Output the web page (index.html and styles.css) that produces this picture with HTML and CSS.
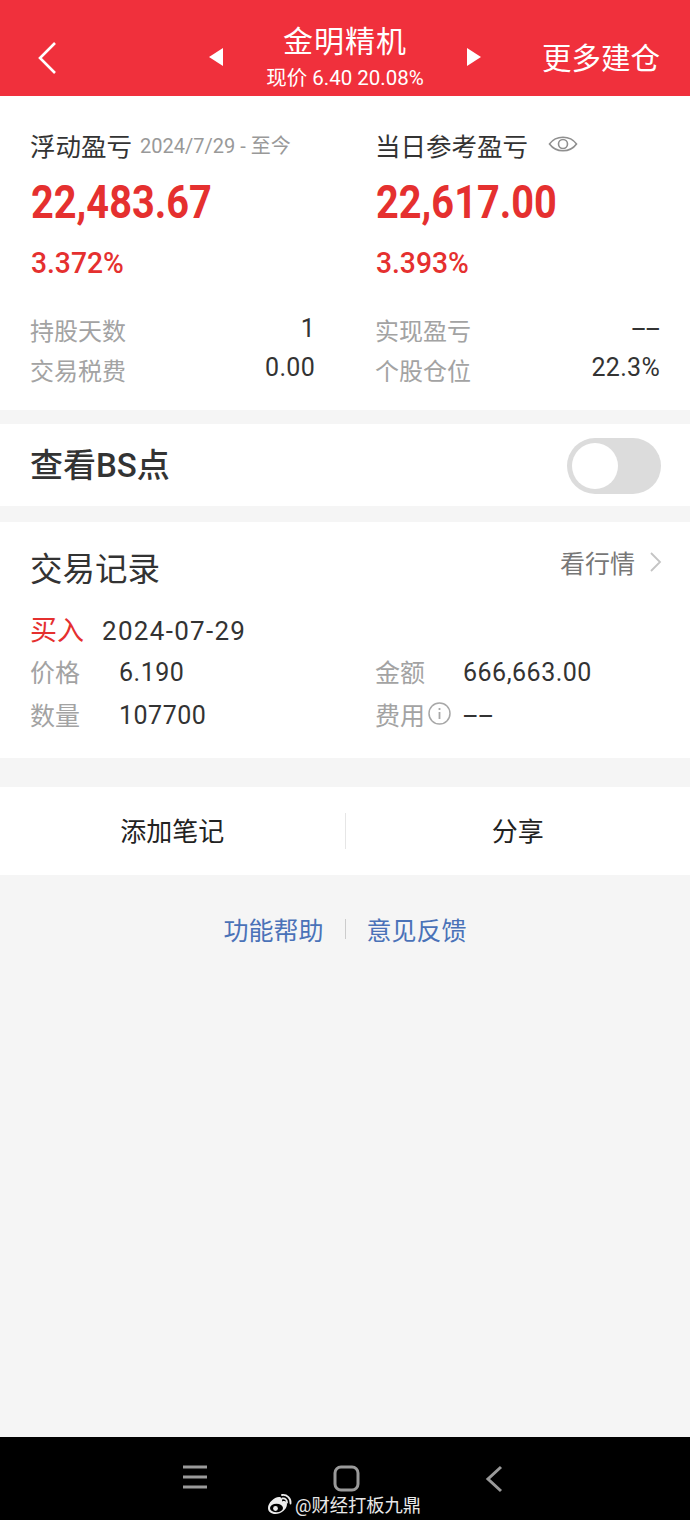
FILE: index.html
```html
<!DOCTYPE html>
<html lang="zh-CN">
<head>
    <meta charset="UTF-8">
    <meta name="viewport" content="width=device-width, initial-scale=1.0">
    <title>金明精机</title>
    <link rel="stylesheet" href="styles.css">
</head>
<body>
    <header class="top-bar">
        <svg class="back-icon" width="22" height="34" viewBox="0 0 22 34"><path d="M19 2 L4 17 L19 32" fill="none" stroke="#fff" stroke-width="2.6"/></svg>
        <div class="stock-switch">
            <svg width="16" height="20" viewBox="0 0 16 20"><path d="M15 1 V19 L1 10 Z" fill="#fff"/></svg>
            <div class="stock-title">
                <div class="stock-name">金明精机</div>
                <div class="stock-price">现价 6.40 20.08%</div>
            </div>
            <svg width="16" height="20" viewBox="0 0 16 20"><path d="M1 1 V19 L15 10 Z" fill="#fff"/></svg>
        </div>
        <div class="top-action">更多建仓</div>
    </header>

    <section class="card summary">
        <div class="summary-col">
            <div class="summary-head">
                <span class="summary-label">浮动盈亏</span>
                <span class="summary-date">2024/7/29 - 至今</span>
            </div>
            <div class="big-num">22,483.67</div>
            <div class="pct-num">3.372%</div>
            <div class="stat-row stat-first"><span class="stat-label">持股天数</span><span class="stat-value">1</span></div>
            <div class="stat-row"><span class="stat-label">交易税费</span><span class="stat-value stat-low">0.00</span></div>
        </div>
        <div class="summary-col">
            <div class="summary-head">
                <span class="summary-label">当日参考盈亏</span>
                <svg class="eye-icon" width="30" height="22" viewBox="0 0 30 22"><path d="M1.5 11 C8 2 22 2 28.500 11 C22 20 8 20 1.500 11 Z" fill="none" stroke="#8f8f8f" stroke-width="1.600"/><circle cx="15" cy="11" r="4.500" fill="none" stroke="#8f8f8f" stroke-width="1.600"/></svg>
            </div>
            <div class="big-num">22,617.00</div>
            <div class="pct-num">3.393%</div>
            <div class="stat-row stat-first"><span class="stat-label">实现盈亏</span><span class="stat-value dash dash-right">--</span></div>
            <div class="stat-row"><span class="stat-label">个股仓位</span><span class="stat-value stat-low">22.3%</span></div>
        </div>
    </section>

    <section class="card bs-row">
        <span class="bs-label">查看BS点</span>
        <div class="switch"><div class="switch-knob"></div></div>
    </section>

    <section class="card records">
        <div class="records-head">
            <span class="records-title">交易记录</span>
            <span class="records-link">看行情
                <svg width="13" height="22" viewBox="0 0 13 22"><path d="M2 2 L11 11 L2 20" fill="none" stroke="#c4c4c4" stroke-width="1.800"/></svg>
            </span>
        </div>
        <div class="trade-head"><span class="trade-type">买入</span><span class="trade-date">2024-07-29</span></div>
        <div class="trade-grid">
            <div class="trade-item"><span class="trade-label">价格</span><span class="trade-value">6.190</span></div>
            <div class="trade-item"><span class="trade-label">金额</span><span class="trade-value">666,663.00</span></div>
            <div class="trade-item"><span class="trade-label">数量</span><span class="trade-value">107700</span></div>
            <div class="trade-item">
                <span class="trade-label fee-label">费用<svg class="info-icon" width="23" height="23" viewBox="0 0 23 23"><circle cx="11.500" cy="11.500" r="10.500" fill="none" stroke="#a8a8a8" stroke-width="1.500"/><rect x="10.600" y="10" width="1.800" height="7" fill="#a8a8a8"/><rect x="10.600" y="6" width="1.800" height="2" fill="#a8a8a8"/></svg></span>
                <span class="trade-value dash dash-left">--</span>
            </div>
        </div>
    </section>

    <section class="card actions">
        <div class="action-btn">添加笔记</div>
        <div class="action-line"></div>
        <div class="action-btn">分享</div>
    </section>

    <div class="help-links">
        <span>功能帮助</span>
        <div class="help-line"></div>
        <span>意见反馈</span>
    </div>

    <footer class="nav-bar">
        <svg width="26" height="24" viewBox="0 0 26 24"><path d="M1 2 H25 M1 12 H25 M1 22 H25" stroke="#9a9a9a" stroke-width="3"/></svg>
        <svg width="27" height="27" viewBox="0 0 27 27"><rect x="2" y="2" width="23" height="23" rx="6" fill="none" stroke="#9a9a9a" stroke-width="3"/></svg>
        <svg width="18" height="28" viewBox="0 0 18 28"><path d="M16 2 L3 14 L16 26" fill="none" stroke="#9a9a9a" stroke-width="3"/></svg>
        <div class="watermark">
            <svg width="25" height="22" viewBox="0 0 25 22"><path d="M1 15 C1 10 7 4 12 4 C15 4 15.500 6.500 15 8.500 C18 7.500 20 8.500 20 11 C20 16.500 14 21 8.500 21 C4 21 1 18.500 1 15 Z" fill="#ececec"/><ellipse cx="9.500" cy="15" rx="6.500" ry="4.300" fill="#000"/><circle cx="8.500" cy="15.500" r="2.400" fill="#ececec"/><path d="M15 2 A7.500 7.500 0 0 1 23.500 10.500 M15.500 5.500 A3.800 3.800 0 0 1 20 9.500" fill="none" stroke="#ececec" stroke-width="1.800" stroke-linecap="round"/></svg>
            <span>@财经打板九鼎</span>
        </div>
    </footer>
</body>
</html>
```

FILE: styles.css
```css
body {
    margin: 0;
    width: 690px;
    height: 1520px;
    position: relative;
    overflow: hidden;
    background-color: #f5f5f5;
    font-family: 'Roboto', 'Noto Sans CJK SC', sans-serif;
    color: #333;
}

.top-bar {
    height: 96px;
    background-color: #f0303c;
    color: #fff;
    display: flex;
    align-items: center;
    padding: 0 30px 0 36px;
    box-sizing: border-box;
}

.back-icon {
    margin-top: 20px;
}

.stock-switch {
    display: flex;
    align-items: center;
    margin-left: 150px;
    margin-top: 18px;
    width: 274px;
    justify-content: space-between;
}

.stock-title {
    text-align: center;
    margin-top: -4px;
}

.stock-name {
    font-size: 30px;
    line-height: 36px;
    letter-spacing: 1px;
}

.stock-price {
    font-size: 20.500px;
    line-height: 24px;
    margin-top: 6px;
    margin-bottom: -3px;
    white-space: nowrap;
}

.top-action {
    margin-left: auto;
    margin-top: 16px;
    font-size: 29.500px;
}

.card {
    background-color: #fff;
}

.summary {
    display: flex;
    height: 314px;
    padding: 30px 30px 0 31px;
    box-sizing: border-box;
    gap: 61px;
}

.summary-col {
    width: 284px;
}

.summary-head {
    display: flex;
    align-items: center;
    height: 36px;
}

.summary-label {
    font-size: 25.500px;
    color: #333;
    margin-left: -1px;
}

.summary-date {
    font-size: 20px;
    color: #999;
    margin-left: 8px;
    white-space: nowrap;
}

.eye-icon {
    margin-left: 20px;
}

.big-num {
    font-size: 47px;
    font-weight: 700;
    line-height: 52px;
    margin-top: 14px;
    color: #e5302f;
    transform: scaleX(0.845);
    transform-origin: left;
}

.pct-num {
    font-size: 30px;
    font-weight: 500;
    line-height: 34px;
    margin-top: 18px;
    color: #e5302f;
    transform: scaleX(0.94);
    transform-origin: left;
}

.stat-row {
    display: flex;
    justify-content: space-between;
    height: 40px;
    align-items: center;
}

.stat-first {
    margin-top: 29px;
}

.stat-label {
    font-size: 24px;
    color: #a3a3a3;
    margin-left: -1px;
}

.stat-value {
    font-size: 25px;
    color: #333;
    margin-top: -2px;
    letter-spacing: 0.3px;
}

.stat-low {
    margin-top: -4px;
}

.dash {
    display: inline-block;
    letter-spacing: 0;
}

.dash-right {
    transform: scaleX(2.050);
    transform-origin: right;
}

.dash-left {
    transform: scaleX(2.100);
    transform-origin: left;
}

.bs-row {
    margin-top: 14px;
    height: 82px;
    display: flex;
    align-items: center;
    justify-content: space-between;
    padding: 0 29px 0 30px;
}

.bs-label {
    font-size: 33px;
    font-weight: 500;
    color: #333;
    margin-top: -4px;
}

.switch {
    width: 94px;
    height: 56px;
    margin-top: 2px;
    border-radius: 28px;
    background-color: #dcdcdc;
    padding: 5px;
    box-sizing: border-box;
}

.switch-knob {
    width: 46px;
    height: 46px;
    border-radius: 50%;
    background-color: #fff;
}

.records {
    margin-top: 16px;
    height: 236px;
    padding: 26px 30px 0;
    box-sizing: border-box;
}

.records-head {
    display: flex;
    justify-content: space-between;
    align-items: center;
    height: 42px;
}

.records-title {
    font-size: 32.500px;
    color: #333;
    margin-top: -6px;
}

.records-link {
    font-size: 25px;
    color: #777;
    display: flex;
    align-items: center;
    gap: 14px;
    margin-top: -14px;
    margin-right: -2px;
}

.trade-head {
    margin-top: 20px;
    display: flex;
    align-items: center;
    height: 38px;
}

.trade-type {
    font-size: 27px;
    color: #e5302f;
    width: 72px;
    margin-top: -2px;
}

.trade-date {
    font-size: 26px;
    letter-spacing: 1.300px;
    color: #333;
    margin-top: 4px;
}

.trade-grid {
    display: grid;
    grid-template-columns: 345px 1fr;
    grid-auto-rows: 43px;
    margin-top: 3px;
}

.trade-item {
    display: flex;
    align-items: center;
}

.trade-label {
    width: 89px;
    font-size: 25px;
    color: #a3a3a3;
    margin-top: -4px;
}

.trade-item:nth-child(even) .trade-label {
    width: 88px;
}

.fee-label {
    display: flex;
    align-items: center;
}

.info-icon {
    margin-left: 3px;
    flex: none;
}

.trade-value {
    font-size: 25px;
    color: #333;
    letter-spacing: 0.5px;
}

.actions {
    margin-top: 29px;
    height: 88px;
    display: flex;
    align-items: center;
}

.action-btn {
    flex: 1;
    text-align: center;
    font-size: 26px;
    color: #222;
    margin-top: -4px;
}

.action-line {
    width: 1px;
    height: 36px;
    background-color: #e6e6e6;
}

.help-links {
    display: flex;
    justify-content: center;
    align-items: center;
    gap: 21px;
    margin-top: 36px;
    font-size: 25px;
    color: #4a72b8;
}

.help-line {
    width: 1px;
    height: 20px;
    background-color: #ccc;
}

.nav-bar {
    position: absolute;
    left: 0;
    right: 0;
    bottom: 0;
    height: 83px;
    background-color: #000;
    display: flex;
    justify-content: space-between;
    padding: 28px 187px 0 182px;
    box-sizing: border-box;
    align-items: flex-start;
}

.watermark {
    position: absolute;
    left: 267px;
    top: 54px;
    display: flex;
    align-items: center;
    gap: 3px;
    font-size: 18.300px;
    color: #e8e8e8;
}
```
